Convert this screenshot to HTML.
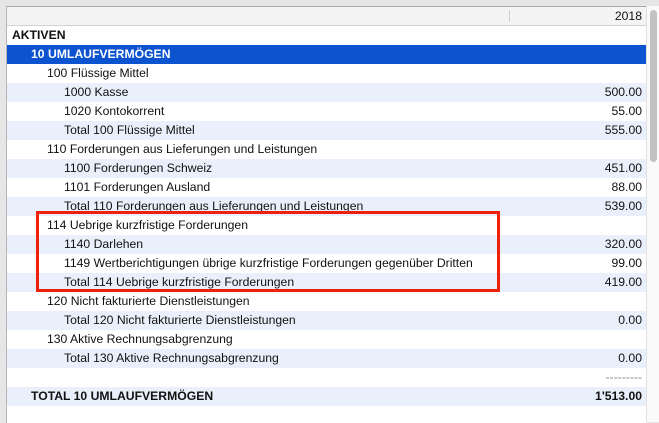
<!DOCTYPE html>
<html><head><meta charset="utf-8"><style>
body{margin:0;width:659px;height:422px;background:#e6e6e6;overflow:hidden;font-family:"Liberation Sans",sans-serif;font-size:12.2px;color:#111;position:relative}
#t{position:absolute;left:6px;top:6px;width:640px;height:416px;background:#fff;border-left:1px solid #b5b5b5;border-top:1px solid #a9a9a9}
#hd{position:absolute;left:0;top:0;width:640px;height:18px;background:#f4f4f4;border-bottom:1px solid #d2d2d2}
#hd .sep{position:absolute;left:502px;top:3px;width:1px;height:12px;background:#d0d0d0}
#hd .y{position:absolute;right:5px;top:2px}
.r{position:absolute;left:0;width:640px;height:19px;line-height:19px;white-space:nowrap}
.r span{position:absolute}
.r .v{right:5px}
.l{background:#eaf0fb}
.b{font-weight:bold}
.sel{background:#0b53cf;color:#fff;font-weight:bold}
#sb{position:absolute;left:646px;top:6px;width:13px;height:416px;background:#fafafa;border-left:1px solid #e0e0e0}
#th{position:absolute;left:650px;top:10px;width:7px;height:152px;background:#c2c2c2;border-radius:4px}
#box{position:absolute;left:36px;top:211px;width:458px;height:75px;border:3px solid #f0200f}
</style></head><body>
<div id="t">
<div id="hd"><div class="sep"></div><span class="y">2018</span></div>
<div class="r b" style="top:19px"><span style="left:5px">AKTIVEN</span></div>
<div class="r sel" style="top:38px"><span style="left:24px">10 UMLAUFVERMÖGEN</span></div>
<div class="r" style="top:57px"><span style="left:40px">100 Flüssige Mittel</span></div>
<div class="r l" style="top:76px"><span style="left:57px">1000 Kasse</span><span class="v">500.00</span></div>
<div class="r" style="top:95px"><span style="left:57px">1020 Kontokorrent</span><span class="v">55.00</span></div>
<div class="r l" style="top:114px"><span style="left:57px">Total 100 Flüssige Mittel</span><span class="v">555.00</span></div>
<div class="r" style="top:133px"><span style="left:40px">110 Forderungen aus Lieferungen und Leistungen</span></div>
<div class="r l" style="top:152px"><span style="left:57px">1100 Forderungen Schweiz</span><span class="v">451.00</span></div>
<div class="r" style="top:171px"><span style="left:57px">1101 Forderungen Ausland</span><span class="v">88.00</span></div>
<div class="r l" style="top:190px"><span style="left:57px">Total 110 Forderungen aus Lieferungen und Leistungen</span><span class="v">539.00</span></div>
<div class="r" style="top:209px"><span style="left:40px">114 Uebrige kurzfristige Forderungen</span></div>
<div class="r l" style="top:228px"><span style="left:57px">1140 Darlehen</span><span class="v">320.00</span></div>
<div class="r" style="top:247px"><span style="left:57px">1149 Wertberichtigungen übrige kurzfristige Forderungen gegenüber Dritten</span><span class="v">99.00</span></div>
<div class="r l" style="top:266px"><span style="left:57px">Total 114 Uebrige kurzfristige Forderungen</span><span class="v">419.00</span></div>
<div class="r" style="top:285px"><span style="left:40px">120 Nicht fakturierte Dienstleistungen</span></div>
<div class="r l" style="top:304px"><span style="left:57px">Total 120 Nicht fakturierte Dienstleistungen</span><span class="v">0.00</span></div>
<div class="r" style="top:323px"><span style="left:40px">130 Aktive Rechnungsabgrenzung</span></div>
<div class="r l" style="top:342px"><span style="left:57px">Total 130 Aktive Rechnungsabgrenzung</span><span class="v">0.00</span></div>
<div class="r" style="top:361px"><span class="v" style="color:#888">---------</span></div>
<div class="r l b" style="top:380px"><span style="left:24px">TOTAL 10 UMLAUFVERMÖGEN</span><span class="v">1'513.00</span></div>
</div>
<div id="sb"></div><div id="th"></div>
<div id="box"></div>
</body></html>
